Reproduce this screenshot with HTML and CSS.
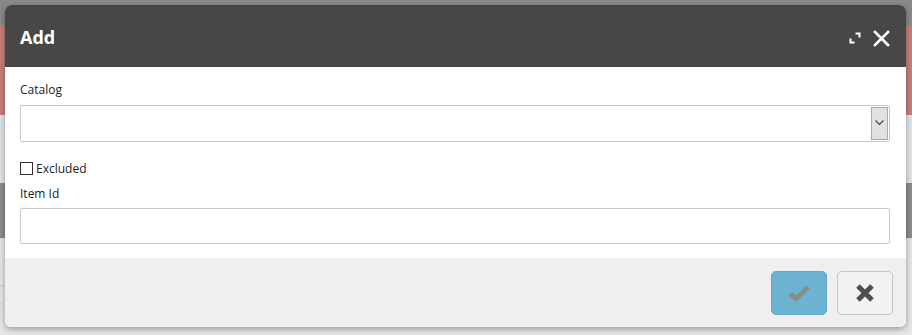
FILE: index.html
```html
<!DOCTYPE html>
<html>
<head>
<meta charset="utf-8">
<link rel="stylesheet" href="styles.css">
</head>
<body>
<div class="page">
  <div class="bg-top"></div>
  <div class="bg-pink"></div>
  <div class="bg-light"></div>
  <div class="bg-dark"></div>
  <div class="bg-rest"><span class="bg-text">t</span></div>
</div>
<div class="modal">
  <div class="modal-header">
    <div class="modal-title">Add</div>
    <div class="header-tools">
      <svg class="icon-expand" width="12" height="12" viewBox="0 0 12 12">
        <path d="M6.5 1.5 H10.5 V5.5" fill="none" stroke="#fff" stroke-width="2"/>
        <path d="M1.5 6.5 V10.5 H5.5" fill="none" stroke="#fff" stroke-width="2"/>
      </svg>
      <svg class="icon-close" width="17" height="17" viewBox="0 0 17 17">
        <path d="M2 2 L15 15 M15 2 L2 15" stroke="#fff" stroke-width="2.6" stroke-linecap="square"/>
      </svg>
    </div>
  </div>
  <div class="modal-body">
    <label class="field-label">Catalog</label>
    <div class="select">
      <div class="select-btn">
        <svg width="9" height="6" viewBox="0 0 9 6"><path d="M0.5 0.5 L4.5 4.5 L8.5 0.5" fill="none" stroke="#444" stroke-width="1.2"/></svg>
      </div>
    </div>
    <div class="check-row">
      <span class="checkbox"></span>
      <span class="check-label">Excluded</span>
    </div>
    <label class="field-label">Item Id</label>
    <div class="input"></div>
  </div>
  <div class="modal-footer">
    <button class="btn btn-ok">
      <svg width="22" height="18" viewBox="0 0 22 18"><path d="M2 9.5 L8 15 L20 3" fill="none" stroke="#8a8a8a" stroke-width="4.5"/></svg>
    </button>
    <button class="btn btn-cancel">
      <svg width="20" height="20" viewBox="0 0 20 20"><path d="M3 3 L17 17 M17 3 L3 17" stroke="#4f4f4f" stroke-width="5"/></svg>
    </button>
  </div>
</div>
</body>
</html>
```
FILE: styles.css
```css
html, body {
  margin: 0;
  padding: 0;
}
body {
  width: 912px;
  height: 335px;
  overflow: hidden;
  font-family: "Open Sans", "Noto Sans", sans-serif;
  position: relative;
  background: #e6e6e6;
}
.page {
  display: flex;
  flex-direction: column;
  height: 335px;
}
.bg-top { height: 25px; background: #8a8a8a; }
.bg-pink { height: 90px; background: #c87d7e; }
.bg-light { height: 68px; background: #e4e4e4; }
.bg-dark { height: 55px; background: #8b8b8b; }
.bg-rest {
  flex: 1;
  background: #e6e6e6;
  border-top: 1px solid #dcdcdc;
}
.bg-text {
  display: block;
  margin-top: 46px;
  padding-top: 10px;
  border-top: 1px solid #cfcfcf;
  width: 20px;
  font-size: 13px;
  line-height: 18px;
  color: #777;
  text-indent: -4px;
}

.modal {
  position: absolute;
  left: 5px;
  top: 5px;
  width: 901px;
  height: 322px;
  border-radius: 6px;
  overflow: hidden;
  background: #fff;
  box-shadow: 0 2px 6px rgba(0,0,0,0.35);
  display: flex;
  flex-direction: column;
}
.modal-header {
  height: 62px;
  background: #474747;
  display: flex;
  align-items: center;
  justify-content: space-between;
  padding: 0 16px 0 15px;
  box-sizing: border-box;
}
.modal-title {
  color: #fff;
  font-weight: 700;
  font-size: 18px;
  margin-top: 2px;
}
.header-tools {
  display: flex;
  align-items: center;
  gap: 12px;
  margin-top: 4px;
}
.icon-expand, .icon-close { display: block; }

.modal-body {
  padding: 14px 16px 14px 15px;
  height: 191px;
  box-sizing: border-box;
  display: flex;
  flex-direction: column;
}
.field-label {
  font-size: 12px;
  color: #222;
  line-height: 18px;
}
.select {
  margin-top: 6px;
  height: 37px;
  border: 1px solid #c8c8c8;
  border-radius: 2px;
  box-sizing: border-box;
  display: flex;
  justify-content: flex-end;
}
.select-btn {
  width: 17px;
  margin: 1px;
  background: #e1e1e1;
  border: 1px solid #aaa;
  box-sizing: border-box;
  display: flex;
  align-items: center;
  justify-content: center;
}
.check-row {
  display: flex;
  align-items: center;
  margin-top: 19px;
  height: 16px;
}
.checkbox {
  width: 13px;
  height: 13px;
  border: 1px solid #333;
  box-sizing: border-box;
  margin-right: 3px;
}
.check-label {
  font-size: 12px;
  color: #222;
}
.check-row + .field-label {
  margin-top: 8px;
}
.input {
  margin-top: 5px;
  height: 37px;
  border: 1px solid #c8c8c8;
  border-radius: 2px;
  box-sizing: border-box;
}

.modal-footer {
  flex: 1;
  background: #efefef;
  display: flex;
  justify-content: flex-end;
  align-items: flex-start;
  gap: 10px;
  padding: 13px 13px 0 0;
}
.btn {
  width: 56px;
  height: 44px;
  border-radius: 5px;
  display: flex;
  align-items: center;
  justify-content: center;
  padding: 0;
  box-sizing: border-box;
}
.btn-ok {
  background: #6cb3d1;
  border: 1px solid #5fa8c8;
}
.btn-cancel {
  background: #f2f2f2;
  border: 1px solid #c4c4c4;
}
```
